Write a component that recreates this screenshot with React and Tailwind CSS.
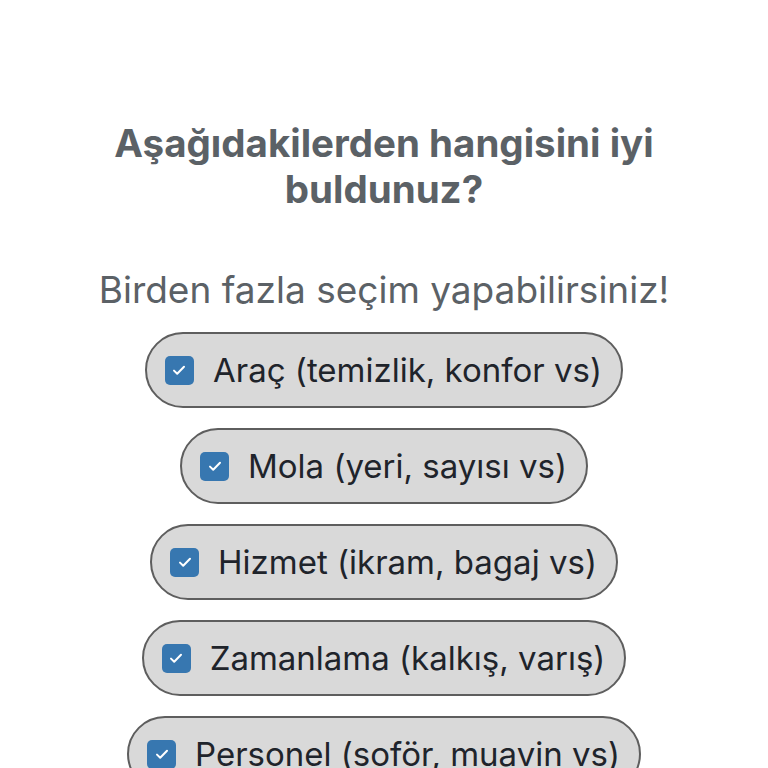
import React, { useState } from 'react';

const options = [
  'Araç (temizlik, konfor vs)',
  'Mola (yeri, sayısı vs)',
  'Hizmet (ikram, bagaj vs)',
  'Zamanlama (kalkış, varış)',
  'Personel (soför, muavin vs)',
];

const CheckIcon = () => (
  <svg viewBox="0 0 16 16" className="w-[16px] h-[16px]" fill="none" stroke="white" strokeWidth={2} strokeLinecap="round" strokeLinejoin="round">
    <path d="M3 8.6l3.2 3.1L13 4.8" />
  </svg>
);

export default function App() {
  const [checked, setChecked] = useState(options.map(() => true));

  const toggle = (i) => setChecked((prev) => prev.map((v, j) => (j === i ? !v : v)));

  return (
    <div className="min-h-screen bg-white font-['Inter','Liberation_Sans',sans-serif] flex flex-col items-center pt-[120px]">
      <h1 className="text-[38.5px] leading-[46px] font-bold text-[#5b6166] text-center w-[600px]">
        Aşağıdakilerden hangisini iyi buldunuz?
      </h1>
      <p className="mt-[55px] text-[37px] leading-[46px] text-[#5b6166] text-center">
        Birden fazla seçim yapabilirsiniz!
      </p>
      <div className="mt-[19px] flex flex-col items-center gap-[20px]">
        {options.map((label, i) => (
          <button
            key={label}
            onClick={() => toggle(i)}
            className="h-[76px] flex items-center gap-[19px] pl-[18px] pr-[19px] rounded-full bg-[#d9d9d9] border-2 border-[#5e5e5e]"
          >
            <span
              className={
                'w-[29px] h-[29px] rounded-[5px] flex items-center justify-center ' +
                (checked[i] ? 'bg-[#3777b0]' : 'bg-white border border-gray-400')
              }
            >
              {checked[i] && <CheckIcon />}
            </span>
            <span className="text-[33px] leading-none text-[#1f242b]">{label}</span>
          </button>
        ))}
      </div>
    </div>
  );
}
